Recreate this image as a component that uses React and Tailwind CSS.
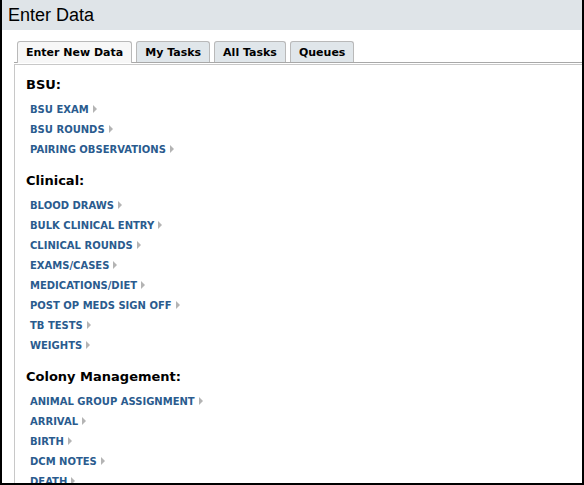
import React from "react";

const sections = [
  { title: "BSU:", items: ["BSU EXAM", "BSU ROUNDS", "PAIRING OBSERVATIONS"] },
  {
    title: "Clinical:",
    items: [
      "BLOOD DRAWS",
      "BULK CLINICAL ENTRY",
      "CLINICAL ROUNDS",
      "EXAMS/CASES",
      "MEDICATIONS/DIET",
      "POST OP MEDS SIGN OFF",
      "TB TESTS",
      "WEIGHTS",
    ],
  },
  {
    title: "Colony Management:",
    items: ["ANIMAL GROUP ASSIGNMENT", "ARRIVAL", "BIRTH", "DCM NOTES", "DEATH", "DEPARTURE"],
  },
];

const tabs = ["Enter New Data", "My Tasks", "All Tasks", "Queues"];

function Arrow() {
  return (
    <svg width="4" height="8" viewBox="0 0 4 8" className="ml-[4px] inline-block">
      <path d="M0 0 L4 4 L0 8 Z" fill="#b4b4b4" />
    </svg>
  );
}

export default function App() {
  return (
    <div className="w-[584px] h-[485px] overflow-hidden bg-white border-x-2 border-b-2 border-black font-['DejaVu_Sans',sans-serif]">
      <div className="h-[30px] bg-[#dfe4e8] pl-[6px] flex items-center font-['Liberation_Sans',Arial,sans-serif] text-[18px] text-black">
        Enter Data
      </div>
      <div className="pl-[12px] pt-[12px]">
        <div className="flex gap-[4px] pl-[3px] h-[21px] border-b border-[#a8a8a8] items-end">
          {tabs.map((t, i) => (
            <div
              key={t}
              className={
                "h-[21px] px-[8px] flex items-center rounded-t-[3px] border border-b-0 border-[#b9b9b9] text-[11px] font-bold text-black leading-none " +
                (i === 0 ? "bg-[#f7f7f7] h-[22px] -mb-px" : "bg-[#e0e6ea]")
              }
            >
              {t}
            </div>
          ))}
        </div>
        <div className="mt-[1px] border-l border-t border-[#c8c8c8] pl-[11px] pt-[10px]">
          {sections.map((s, si) => (
            <div key={s.title} className={si > 0 ? "mt-[12px]" : ""}>
              <div className="h-[20px] leading-[20px] text-[13px] font-bold text-black mb-[4px]">{s.title}</div>
              {s.items.map((it) => (
                <div key={it} className="h-[20px] flex items-center pl-[4px] text-[10px] font-bold text-[#2a5b8e]">
                  {it}
                  <Arrow />
                </div>
              ))}
            </div>
          ))}
        </div>
      </div>
    </div>
  );
}
